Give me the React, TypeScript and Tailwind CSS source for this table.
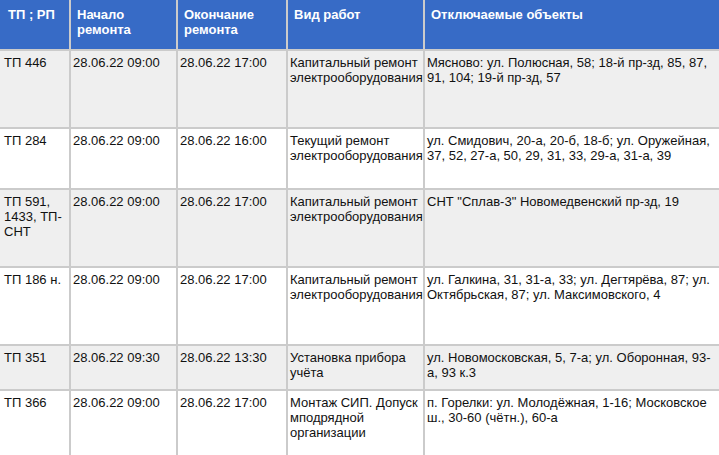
const headers = ['ТП ; РП', 'Начало ремонта', 'Окончание ремонта', 'Вид работ', 'Отключаемые объекты'];

const rows = [
  ['ТП 446', '28.06.22 09:00', '28.06.22 17:00', 'Капитальный ремонт электрооборудования', 'Мясново: ул. Полюсная, 58; 18-й пр-зд, 85, 87, 91, 104; 19-й пр-зд, 57'],
  ['ТП 284', '28.06.22 09:00', '28.06.22 16:00', 'Текущий ремонт электрооборудования', 'ул. Смидович, 20-а, 20-б, 18-б; ул. Оружейная, 37, 52, 27-а, 50, 29, 31, 33, 29-а, 31-а, 39'],
  ['ТП 591, 1433, ТП-СНТ', '28.06.22 09:00', '28.06.22 17:00', 'Капитальный ремонт электрооборудования', 'СНТ "Сплав-3" Новомедвенский пр-зд, 19'],
  ['ТП 186 н.', '28.06.22 09:00', '28.06.22 17:00', 'Капитальный ремонт электрооборудования', 'ул. Галкина, 31, 31-а, 33; ул. Дегтярёва, 87; ул. Октябрьская, 87; ул. Максимовского, 4'],
  ['ТП 351', '28.06.22 09:30', '28.06.22 13:30', 'Установка прибора учёта', 'ул. Новомосковская, 5, 7-а; ул. Оборонная, 93-а, 93 к.3'],
  ['ТП 366', '28.06.22 09:00', '28.06.22 17:00', 'Монтаж СИП. Допуск мподрядной организации', 'п. Горелки: ул. Молодёжная, 1-16; Московское ш., 30-60 (чётн.), 60-а'],
];

export default function App() {
  return (
    <div className="w-[719px] h-[455px] overflow-hidden bg-white" style={{ fontFamily: '"Liberation Sans", Arial, sans-serif' }}>
      <div className="grid grid-cols-[69px_105px_108px_135px_1fr] grid-rows-[49px_76px_59px_76px_76px_43px_64px] gap-[2px] bg-[#cbcbcb] text-[13px] leading-[15px]">
        {headers.map((h, i) => (
          <div key={h} className={`bg-[#376bc6] text-white font-bold pt-[7px] pr-1 ${i === 0 ? 'pl-[8px]' : 'pl-[6px]'}`}>
            {h}
          </div>
        ))}
        {rows.map((r, ri) =>
          r.map((c, ci) => (
            <div
              key={`${ri}-${ci}`}
              className={`${ri % 2 === 0 ? 'bg-[#efefef]' : 'bg-white'} text-[#111] pt-[4px] ${ci === 0 ? 'pl-[4px] pr-[1px]' : ci === 3 ? 'pl-[2px] pr-0' : 'pl-[2px] pr-[3px]'}`}
            >
              {c}
            </div>
          ))
        )}
      </div>
    </div>
  );
}
